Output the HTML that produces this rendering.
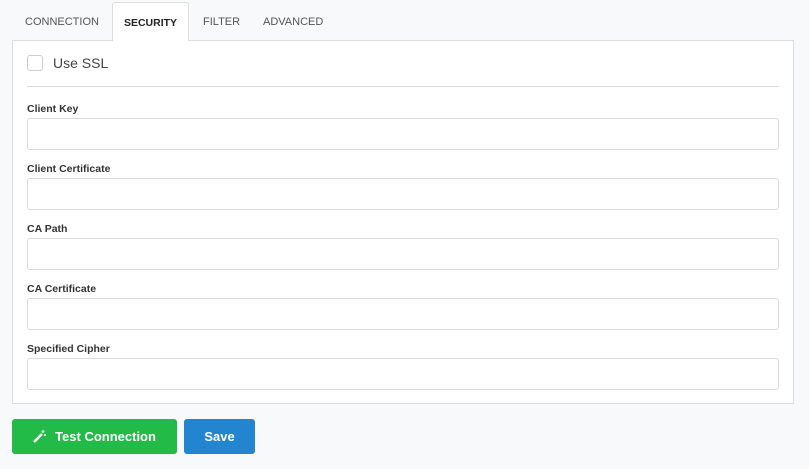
<!DOCTYPE html>
<html><head><style>
body{margin:0;width:809px;height:469px;background:#f8f9fa;font-family:"Liberation Sans",sans-serif;position:relative;overflow:hidden}
.tab{position:absolute;top:2px;height:38px;line-height:40px;font-size:11px;color:#555;}
.act{left:112px;width:77px;background:#fff;border:1px solid #ddd;border-bottom:none;border-radius:3px 3px 0 0;text-align:center;color:#222;font-weight:bold;font-size:10.5px;z-index:2;height:39px;box-sizing:border-box}
.panel{position:absolute;left:12px;top:40px;width:782px;height:364px;background:#fff;border:1px solid #ddd;box-sizing:border-box}
.lbl{position:absolute;left:27px;font-size:10.5px;font-weight:bold;color:#333}
.inp{position:absolute;left:27px;width:752px;height:32px;border:1px solid #d9d9d9;border-radius:3px;box-sizing:border-box;background:#fff}
.btn{position:absolute;top:419px;height:35px;border-radius:3px;color:#fff;font-weight:bold;font-size:13px;line-height:36px;text-align:center}
</style></head><body>
<div class="tab" style="left:25px">CONNECTION</div>
<div class="tab act">SECURITY</div>
<div class="tab" style="left:203px">FILTER</div>
<div class="tab" style="left:263px">ADVANCED</div>
<div class="panel"></div>
<div style="position:absolute;left:27px;top:55px;width:16px;height:16px;border:1px solid #ccc;border-radius:3px;box-sizing:border-box"></div>
<div style="position:absolute;left:53px;top:55px;font-size:14px;color:#444">Use SSL</div>
<div style="position:absolute;left:27px;top:86px;width:752px;height:1px;background:#ddd"></div>
<div class="lbl" style="top:103px">Client Key</div><div class="inp" style="top:118px"></div>
<div class="lbl" style="top:163px">Client Certificate</div><div class="inp" style="top:178px"></div>
<div class="lbl" style="top:223px">CA Path</div><div class="inp" style="top:238px"></div>
<div class="lbl" style="top:283px">CA Certificate</div><div class="inp" style="top:298px"></div>
<div class="lbl" style="top:343px">Specified Cipher</div><div class="inp" style="top:358px"></div>
<div class="btn" style="left:12px;width:165px;background:#22bb47"><svg width="14" height="14" viewBox="0 0 14 14" style="vertical-align:-2px;margin-right:8px"><path d="M1 13L9 5" stroke="#fff" stroke-width="2.5"/><path d="M10 1v3M8.5 2.5h3M12 5v2M11 6h2" stroke="#fff" stroke-width="1.2"/></svg>Test Connection</div>
<div class="btn" style="left:184px;width:71px;background:#2384d0">Save</div>
</body></html>
